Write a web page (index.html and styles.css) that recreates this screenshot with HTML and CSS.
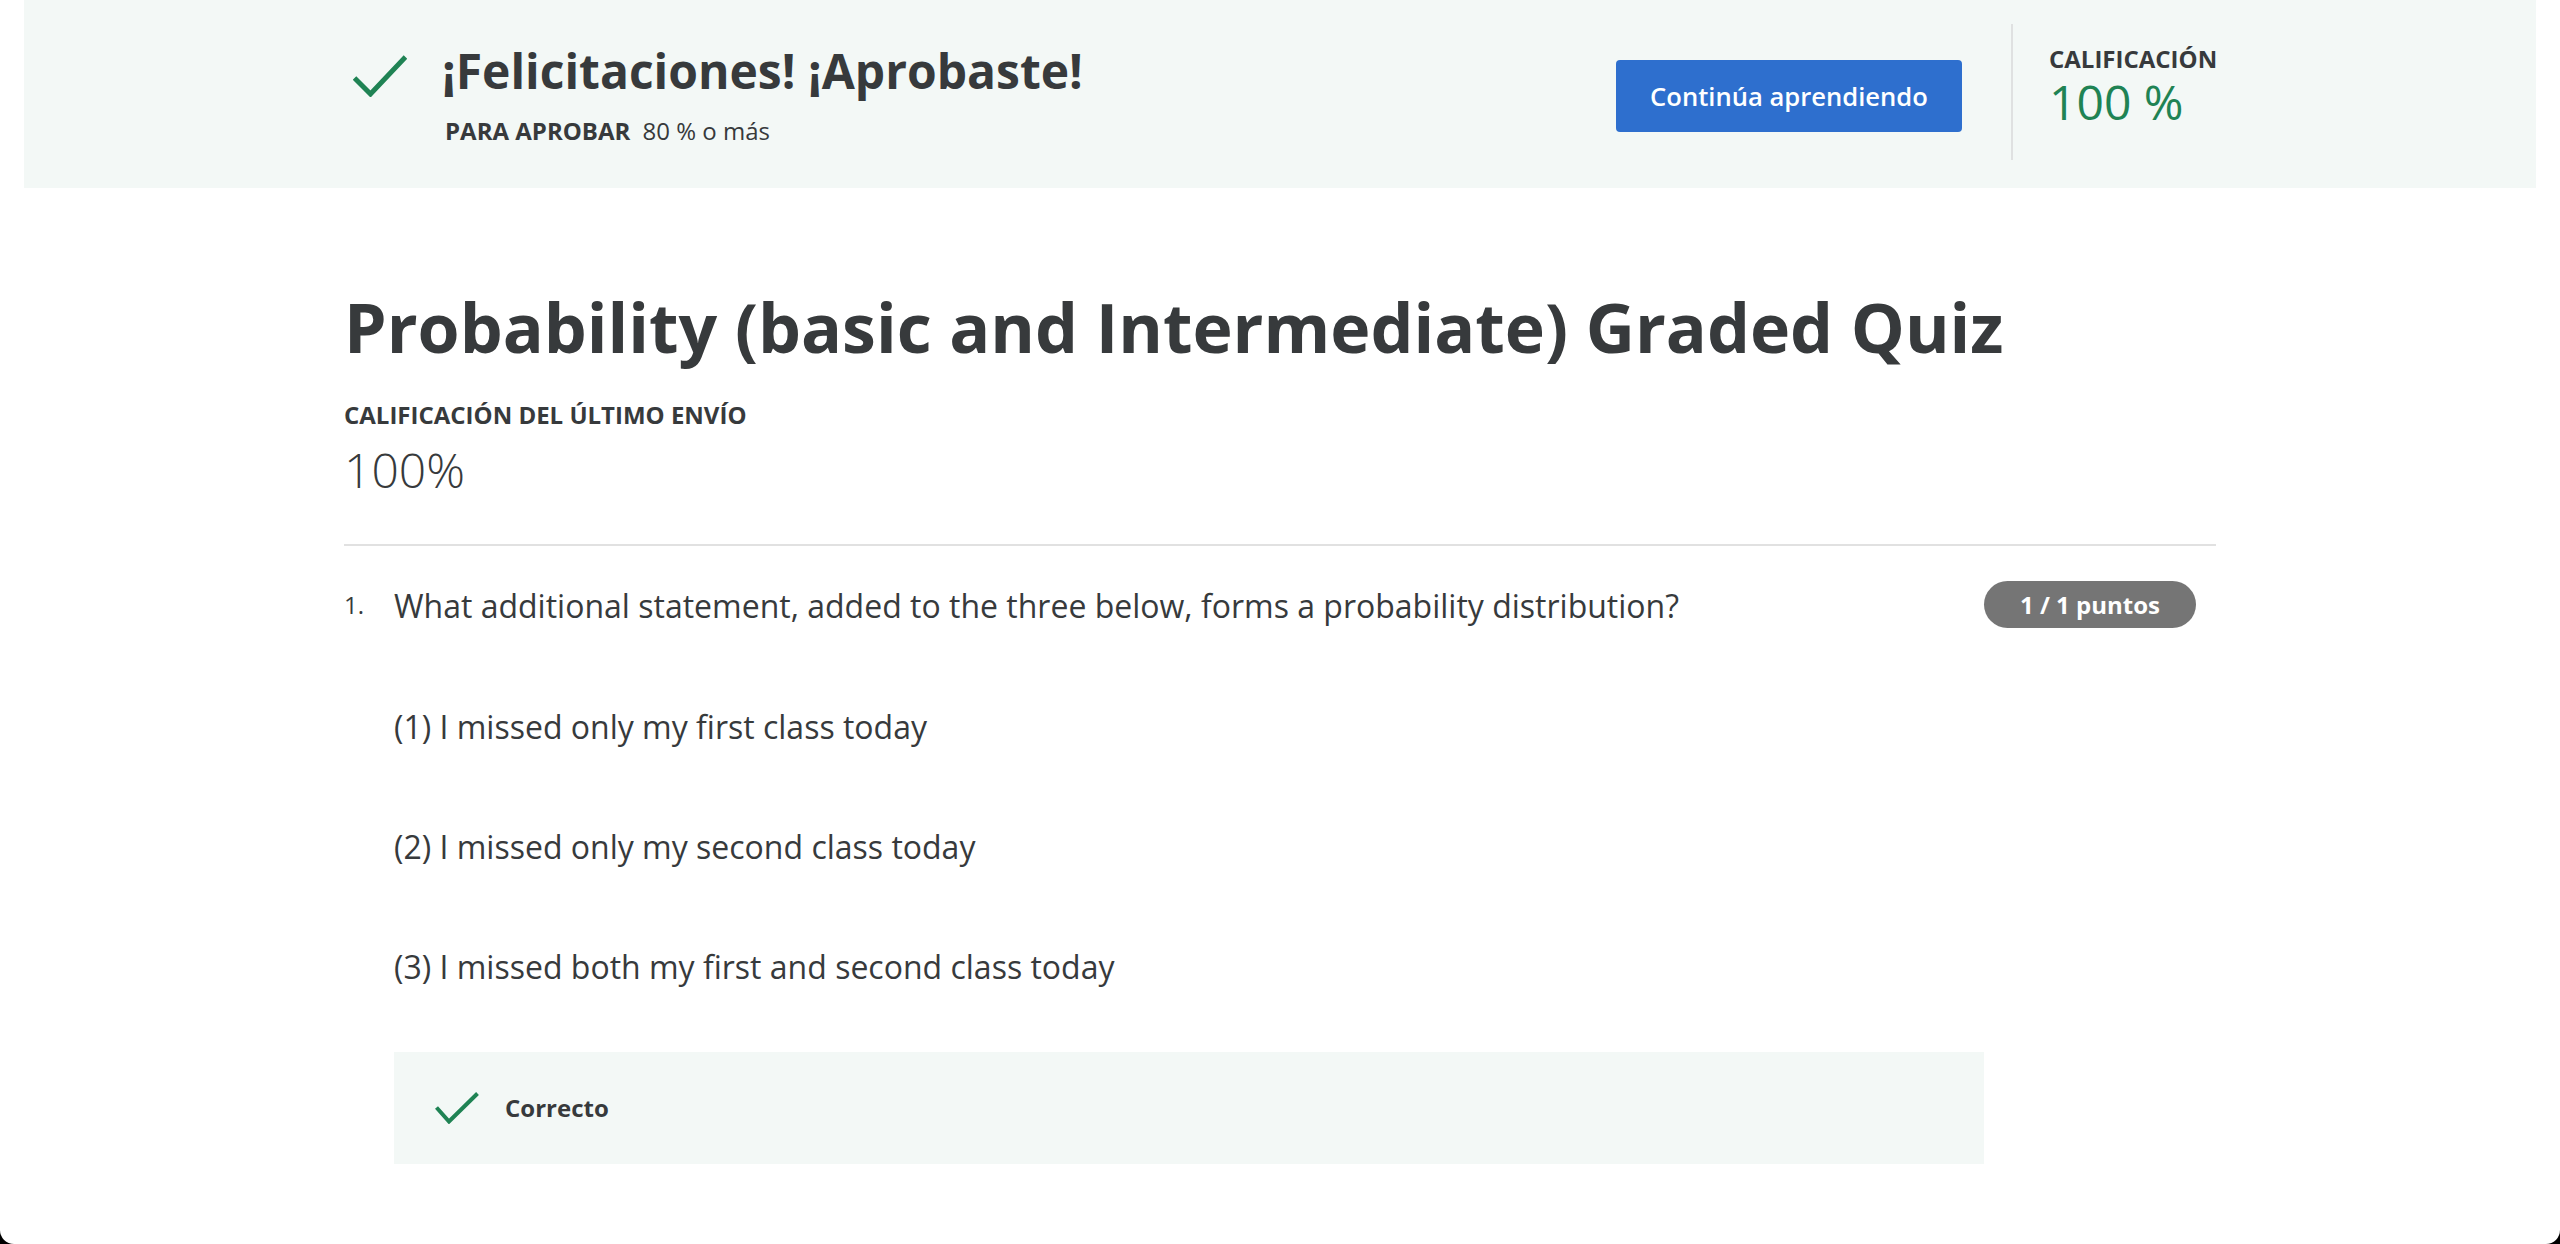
FILE: index.html
```html
<!DOCTYPE html>
<html lang="es">
<head>
<meta charset="utf-8">
<title>Probability (basic and Intermediate) Graded Quiz</title>
<link rel="stylesheet" href="styles.css">
</head>
<body>
<div class="page">
  <header class="banner">
    <div class="banner-inner">
      <div class="pass">
        <svg class="pass-check" viewBox="0 0 54 42" width="54" height="42" aria-hidden="true">
          <polyline points="1.5,23 17.5,39 52.5,2" fill="none" stroke="#1f8354" stroke-width="5"/>
        </svg>
        <div class="pass-text">
          <h2 class="pass-title">¡Felicitaciones! ¡Aprobaste!</h2>
          <p class="pass-sub"><span class="pass-label">PARA APROBAR</span> 80 % o más</p>
        </div>
      </div>
      <button class="btn-primary" type="button">Continúa aprendiendo</button>
      <div class="vdivider"></div>
      <div class="grade">
        <div class="grade-label">CALIFICACIÓN</div>
        <div class="grade-value">100 %</div>
      </div>
    </div>
  </header>

  <main class="content">
    <h1 class="quiz-title">Probability (basic and Intermediate) Graded Quiz</h1>
    <div class="last-label">CALIFICACIÓN DEL ÚLTIMO ENVÍO</div>
    <div class="last-value">100%</div>
    <hr class="rule">

    <section class="question">
      <div class="q-num">1.</div>
      <div class="q-body">
        <p class="q-text">What additional statement, added to the three below, forms a probability distribution?</p>
        <p class="q-text q-opt">(1) I missed only my first class today</p>
        <p class="q-text q-opt">(2) I missed only my second class today</p>
        <p class="q-text q-opt">(3) I missed both my first and second class today</p>
        <div class="feedback">
          <svg class="fb-check" viewBox="0 0 44 32" width="44" height="32" aria-hidden="true">
            <polyline points="1.5,15.5 14,29.5 42.5,1.5" fill="none" stroke="#1f8354" stroke-width="4"/>
          </svg>
          <span class="fb-text">Correcto</span>
        </div>
      </div>
      <div class="q-side">
        <span class="badge">1 / 1 puntos</span>
      </div>
    </section>
  </main>
</div>
</body>
</html>
```

FILE: styles.css
```css
html {
  background: #000;
}

body {
  margin: 0;
  font-family: "Open Sans", "Noto Sans", sans-serif;
  color: #373a3c;
}

.page {
  background: #fff;
  min-height: 1244px;
  border-radius: 0 0 14px 14px;
  overflow: hidden;
}

/* ---------- Banner ---------- */
.banner {
  margin: 0 24px;
  height: 188px;
  background: #f3f8f6;
}

.banner-inner {
  width: 1872px;
  margin: 0 auto;
  display: flex;
  height: 100%;
}

.pass {
  flex: 1;
  display: flex;
  align-items: flex-start;
  padding-top: 41px;
  padding-left: 9px;
}

.pass-check {
  display: block;
  margin-top: 14px;
  margin-right: 35px;
}

.pass-title {
  margin: 0;
  font-size: 48px;
  line-height: 60px;
  font-weight: 700;
}

.pass-sub {
  margin: 14px 0 0 3px;
  font-size: 24px;
  line-height: 32px;
}

.pass-label {
  font-weight: 700;
  margin-right: 6px;
}

.btn-primary {
  align-self: flex-start;
  margin-top: 60px;
  height: 72px;
  width: 346px;
  padding: 0;
  border: 0;
  border-radius: 4px;
  background: #2e6fce;
  color: #fff;
  font-family: "Open Sans", "Noto Sans", sans-serif;
  font-size: 25.6px;
  font-weight: 600;
}

.vdivider {
  width: 2px;
  margin: 24px 36px 28px 49px;
  background: #dfe1e1;
}

.grade {
  width: 167px;
  padding-top: 44px;
}

.grade-label {
  font-size: 24px;
  line-height: 30px;
  font-weight: 700;
}

.grade-value {
  font-size: 48px;
  line-height: 56px;
  color: #1f8354;
  font-weight: 400;
}

/* ---------- Content ---------- */
.content {
  width: 1872px;
  margin: 0 auto;
}

.quiz-title {
  margin: 96px 0 0;
  font-size: 68px;
  line-height: 86px;
  font-weight: 700;
}

.last-label {
  margin-top: 30px;
  font-size: 24px;
  line-height: 30px;
  font-weight: 700;
}

.last-value {
  margin-top: 10px;
  font-size: 48px;
  line-height: 60px;
  font-weight: 300;
}

.rule {
  margin: 44px 0 0;
  border: 0;
  height: 2px;
  background: #e1e1e1;
}

.question {
  display: flex;
  margin-top: 38px;
}

.q-num {
  width: 50px;
  flex: none;
  margin-top: 3px;
  font-size: 24px;
  line-height: 36px;
}

.q-body {
  flex: 1;
}

.q-text {
  margin: 0;
  font-size: 32px;
  line-height: 44px;
}

.q-opt {
  margin-top: 76px;
}

.q-body > .q-text:nth-child(2) {
  margin-top: 77px;
}

.feedback {
  margin-top: 63px;
  height: 112px;
  background: #f3f8f6;
  display: flex;
  align-items: center;
  padding-left: 41px;
}

.fb-check {
  display: block;
  margin-right: 26px;
  margin-top: -1px;
}

.fb-text {
  font-size: 24px;
  line-height: 30px;
  font-weight: 700;
}

.q-side {
  width: 232px;
  flex: none;
}

.badge {
  display: block;
  margin-top: -3px;
  width: 212px;
  height: 47px;
  line-height: 47px;
  border-radius: 24px;
  background: #757575;
  color: #fff;
  text-align: center;
  font-size: 24px;
  font-weight: 700;
}
```
